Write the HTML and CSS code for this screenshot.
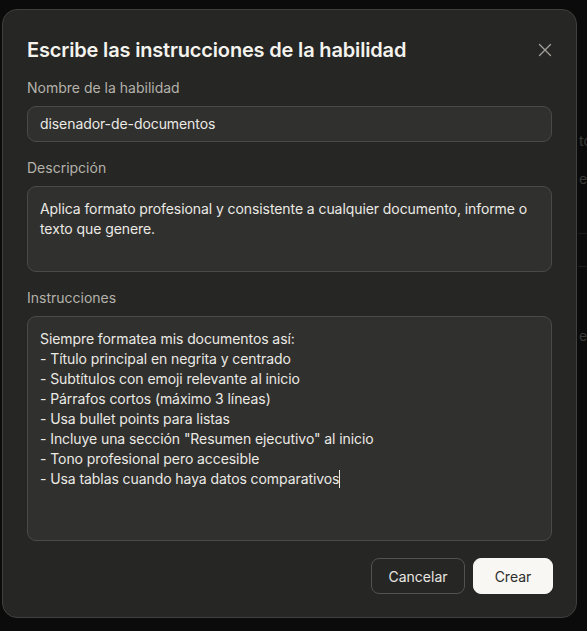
FILE: index.html
```html
<!DOCTYPE html>
<html lang="es">
<head>
    <meta charset="UTF-8">
    <meta name="viewport" content="width=device-width, initial-scale=1.0">
    <title>Escribe las instrucciones de la habilidad</title>
    <link rel="stylesheet" href="styles.css">
</head>
<body>
    <!-- página detrás del modal -->
    <div class="backdrop">
        <span class="ghost ghost-1">to</span>
        <span class="ghost ghost-2">e</span>
        <span class="ghost ghost-3">e</span>
        <div class="ghost-line ghost-line-1"></div>
        <div class="ghost-line ghost-line-2"></div>
    </div>

    <div class="modal">
        <div class="modal-header">
            <h2>Escribe las instrucciones de la habilidad</h2>
            <button class="close-button" aria-label="Cerrar">
                <svg width="14" height="14" viewBox="0 0 14 14" fill="none">
                    <path d="M1.5 1.5 L12.5 12.5 M12.5 1.5 L1.5 12.5" stroke="#a3a29d" stroke-width="1.3" stroke-linecap="round"/>
                </svg>
            </button>
        </div>

        <div class="field">
            <label>Nombre de la habilidad</label>
            <div class="input">disenador-de-documentos</div>
        </div>

        <div class="field">
            <label>Descripción</label>
            <div class="textarea textarea-short">Aplica formato profesional y consistente a cualquier documento, informe o texto que genere.</div>
        </div>

        <div class="field">
            <label>Instrucciones</label>
            <div class="textarea textarea-long">Siempre formatea mis documentos así:
- Título principal en negrita y centrado
- Subtítulos con emoji relevante al inicio
- Párrafos cortos (máximo 3 líneas)
- Usa bullet points para listas
- Incluye una sección "Resumen ejecutivo" al inicio
- Tono profesional pero accesible
- Usa tablas cuando haya datos comparativos<span class="caret"></span></div>
        </div>

        <div class="actions">
            <button class="btn btn-secondary">Cancelar</button>
            <button class="btn btn-primary">Crear</button>
        </div>
    </div>
</body>
</html>
```

FILE: styles.css
```css
body {
    margin: 0;
    padding: 0;
    height: 100vh;
    background: #0b0b0b;
    font-family: Inter, "Liberation Sans", sans-serif;
    overflow: hidden;
    position: relative;
}

/* fondo */
.backdrop {
    position: absolute;
    inset: 0;
}
.ghost {
    position: absolute;
    left: 579px;
    color: #3a3a38;
    font-size: 14px;
}
.ghost-1 { top: 132px; }
.ghost-2 { top: 170px; }
.ghost-3 { top: 327px; }
.ghost-line {
    position: absolute;
    left: 578px;
    right: 0;
    height: 1px;
    background: #1d1d1c;
}
.ghost-line-1 { top: 233px; }
.ghost-line-2 { top: 266px; }

/* modal */
.modal {
    position: absolute;
    top: 9px;
    left: 2px;
    width: 575px;
    height: 609px;
    box-sizing: border-box;
    background: #262624;
    border: 1px solid #3f3f3d;
    border-radius: 15px;
    padding: 26px 24px 23px 24px;
    display: flex;
    flex-direction: column;
    gap: 16px;
}

.modal-header {
    display: flex;
    justify-content: space-between;
    align-items: center;
    height: 28px;
    margin-bottom: -1px;
}
h2 {
    margin: 0;
    font-size: 20px;
    font-weight: 600;
    color: #f4f3ee;
    letter-spacing: -0.17px;
}
.close-button {
    background: none;
    border: none;
    padding: 0;
    width: 14px;
    height: 14px;
    display: flex;
}

.field {
    display: flex;
    flex-direction: column;
    gap: 8px;
}
.field label {
    font-size: 14px;
    line-height: 20px;
    color: #b4b2ab;
}

.input,
.textarea {
    background: #30302e;
    border: 1px solid #4a4a47;
    border-radius: 9px;
    color: #ebeae5;
    font-size: 14px;
    line-height: 20px;
    letter-spacing: -0.08px;
    padding: 0 12px;
    box-sizing: border-box;
}
.input {
    height: 36px;
    display: flex;
    align-items: center;
}
.textarea {
    padding-top: 12px;
    white-space: pre-line;
}
.textarea-short {
    height: 86px;
}
.textarea-long {
    height: 225px;
}
.caret {
    display: inline-block;
    width: 1px;
    height: 18px;
    background: #ebeae5;
    vertical-align: -4px;
}

.actions {
    display: flex;
    justify-content: flex-end;
    gap: 8px;
    margin-top: 1px;
    margin-right: -1px;
}
.btn {
    height: 36px;
    border-radius: 8px;
    font-family: inherit;
    font-size: 14px;
    padding: 0 16px;
    box-sizing: border-box;
}
.btn-secondary {
    width: 94px;
    background: transparent;
    border: 1px solid #52524f;
    color: #e8e7e2;
}
.btn-primary {
    width: 80px;
    background: #f8f7f3;
    border: 1px solid #f8f7f3;
    color: #2e2e2c;
}
```
